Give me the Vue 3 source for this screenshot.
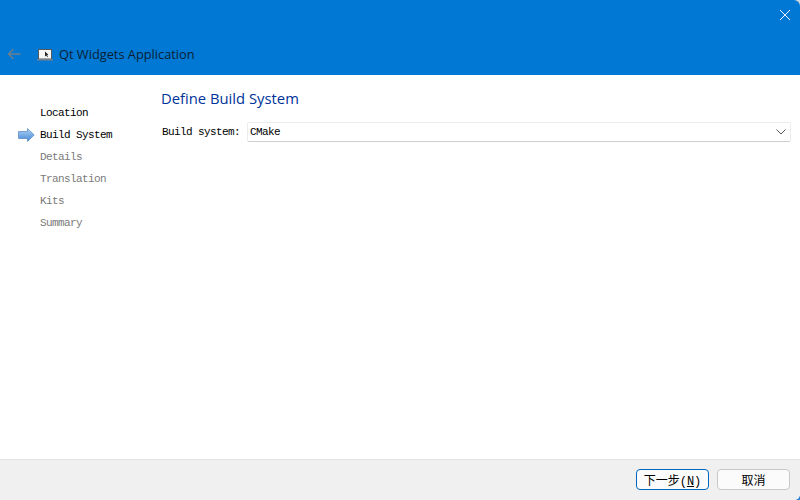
<script setup>
const steps = [
  { label: 'Location', state: 'done' },
  { label: 'Build System', state: 'current' },
  { label: 'Details', state: 'todo' },
  { label: 'Translation', state: 'todo' },
  { label: 'Kits', state: 'todo' },
  { label: 'Summary', state: 'todo' },
]
</script>

<template>
  <div class="screen">
    <div class="window">
      <header class="head">
        <div class="head-top">
          <svg class="close" width="12" height="12" viewBox="0 0 12 12">
            <path d="M1 1 L11 11 M11 1 L1 11" stroke="#eaf3fb" stroke-width="1" fill="none" />
          </svg>
        </div>
        <div class="head-row">
          <svg class="back" width="14" height="12" viewBox="0 0 14 12">
            <path d="M13.5 6 H1.5 M6.5 1 L1.5 6 L6.5 11" stroke="#6f7f8c" stroke-width="1.4" fill="none" />
          </svg>
          <svg class="app-icon" width="16" height="12" viewBox="0 0 16 12">
            <rect x="1.5" y="0.5" width="13" height="9.5" fill="#f6f6f6" stroke="#5a5a5a" />
            <rect x="0" y="10" width="16" height="1.5" fill="#77808a" />
            <path d="M8 2.5 L8 7.5 L9.2 6.4 L10.4 8 L11 7.5 L10 6 L11.4 5.8 Z" fill="#222" />
          </svg>
          <span class="title">Qt Widgets Application</span>
        </div>
      </header>

      <main class="body">
        <nav class="steps">
          <div v-for="s in steps" :key="s.label" class="step" :class="s.state">
            <span class="marker">
              <svg v-if="s.state === 'current'" width="17" height="15" viewBox="0 0 17 15">
                <defs>
                  <linearGradient id="arrowFill" x1="0" y1="0" x2="0" y2="1">
                    <stop offset="0" stop-color="#b4d4f5" />
                    <stop offset="1" stop-color="#3f86d8" />
                  </linearGradient>
                </defs>
                <path d="M0.5 3.5 H9.5 V0.6 L16.2 7 L9.5 13.4 V10.5 H0.5 Z" fill="url(#arrowFill)" stroke="#5f8fc8" stroke-width="0.8" />
              </svg>
            </span>
            <span class="step-label">{{ s.label }}</span>
          </div>
        </nav>

        <section class="page">
          <h1 class="page-title">Define Build System</h1>
          <div class="field">
            <label class="field-label">Build system:</label>
            <div class="combo">
              <span class="combo-text">CMake</span>
              <svg width="10" height="6" viewBox="0 0 10 6">
                <path d="M0.5 0.5 L5 5 L9.5 0.5" stroke="#555" stroke-width="1" fill="none" />
              </svg>
            </div>
          </div>
        </section>
      </main>

      <footer class="foot">
        <button class="btn primary">下一步(<u>N</u>)</button>
        <button class="btn">取消</button>
      </footer>
    </div>
  </div>
</template>

<style>
html, body { margin: 0; background: #fff; }
</style>

<style scoped>
.screen {
  width: 800px;
  height: 500px;
  background: linear-gradient(#cfd6dd 50%, #2f86d2 50%);
}
.window {
  width: 800px;
  height: 500px;
  display: flex;
  flex-direction: column;
  overflow: hidden;
  background: #fff;
  border-radius: 0 6px 6px 0;
}
.head {
  height: 75px;
  flex: none;
  background: #0078d4;
  display: flex;
  flex-direction: column;
}
.head-top {
  height: 30px;
  display: flex;
  justify-content: flex-end;
  align-items: flex-start;
  padding: 9px 9px 0 0;
  box-sizing: border-box;
}
.head-row {
  display: flex;
  align-items: center;
  height: 20px;
  margin-top: 14px;
  padding-left: 7px;
}
.back { flex: none; }
.app-icon { flex: none; margin: 1px 0 0 16px; }
.title {
  margin-left: 6px;
  font: 12.8px "Open Sans", "Noto Sans", sans-serif;
  color: #0a1f33;
}
.body {
  flex: 1;
  display: flex;
  min-height: 0;
}
.steps {
  width: 161px;
  flex: none;
  padding-top: 27px;
  box-sizing: border-box;
}
.step {
  height: 22px;
  display: flex;
  align-items: center;
  font: 11px "Liberation Mono", monospace;
  letter-spacing: -0.6px;
}
.marker {
  width: 40px;
  flex: none;
  display: flex;
  justify-content: flex-start;
  padding-left: 18px;
  box-sizing: border-box;
}
.done, .current { color: #000; }
.todo { color: #7a7a7a; }
.page {
  flex: 1;
  padding: 13px 9px 0 0;
  min-width: 0;
}
.page-title {
  margin: 0;
  font: 400 14.8px/20px "Open Sans", "Noto Sans", sans-serif;
  color: #003399;
}
.field {
  margin-top: 14px;
  display: flex;
  align-items: center;
  gap: 7px;
  padding-left: 1px;
}
.field-label, .combo-text {
  font: 11px "Liberation Mono", monospace;
  letter-spacing: -0.6px;
  color: #000;
}
.combo {
  flex: 1;
  height: 20px;
  box-sizing: border-box;
  border: 1px solid #ececec;
  border-bottom-color: #cfcfcf;
  border-radius: 2px;
  display: flex;
  align-items: center;
  justify-content: space-between;
  padding: 0 4px 0 2px;
}
.foot {
  height: 41px;
  flex: none;
  box-sizing: border-box;
  background: #f0f0f0;
  border-top: 1px solid #e2e2e2;
  display: flex;
  justify-content: flex-end;
  align-items: center;
  gap: 8px;
  padding: 0 10px 1px 0;
}
.btn {
  width: 73px;
  height: 21px;
  box-sizing: border-box;
  padding: 0;
  background: #fbfbfb;
  border: 1px solid #c8c8c8;
  border-radius: 4px;
  font: 12px "Liberation Mono", "Noto Sans CJK SC", sans-serif;
  color: #000;
}
.primary { border-color: #0067c0; }
</style>
